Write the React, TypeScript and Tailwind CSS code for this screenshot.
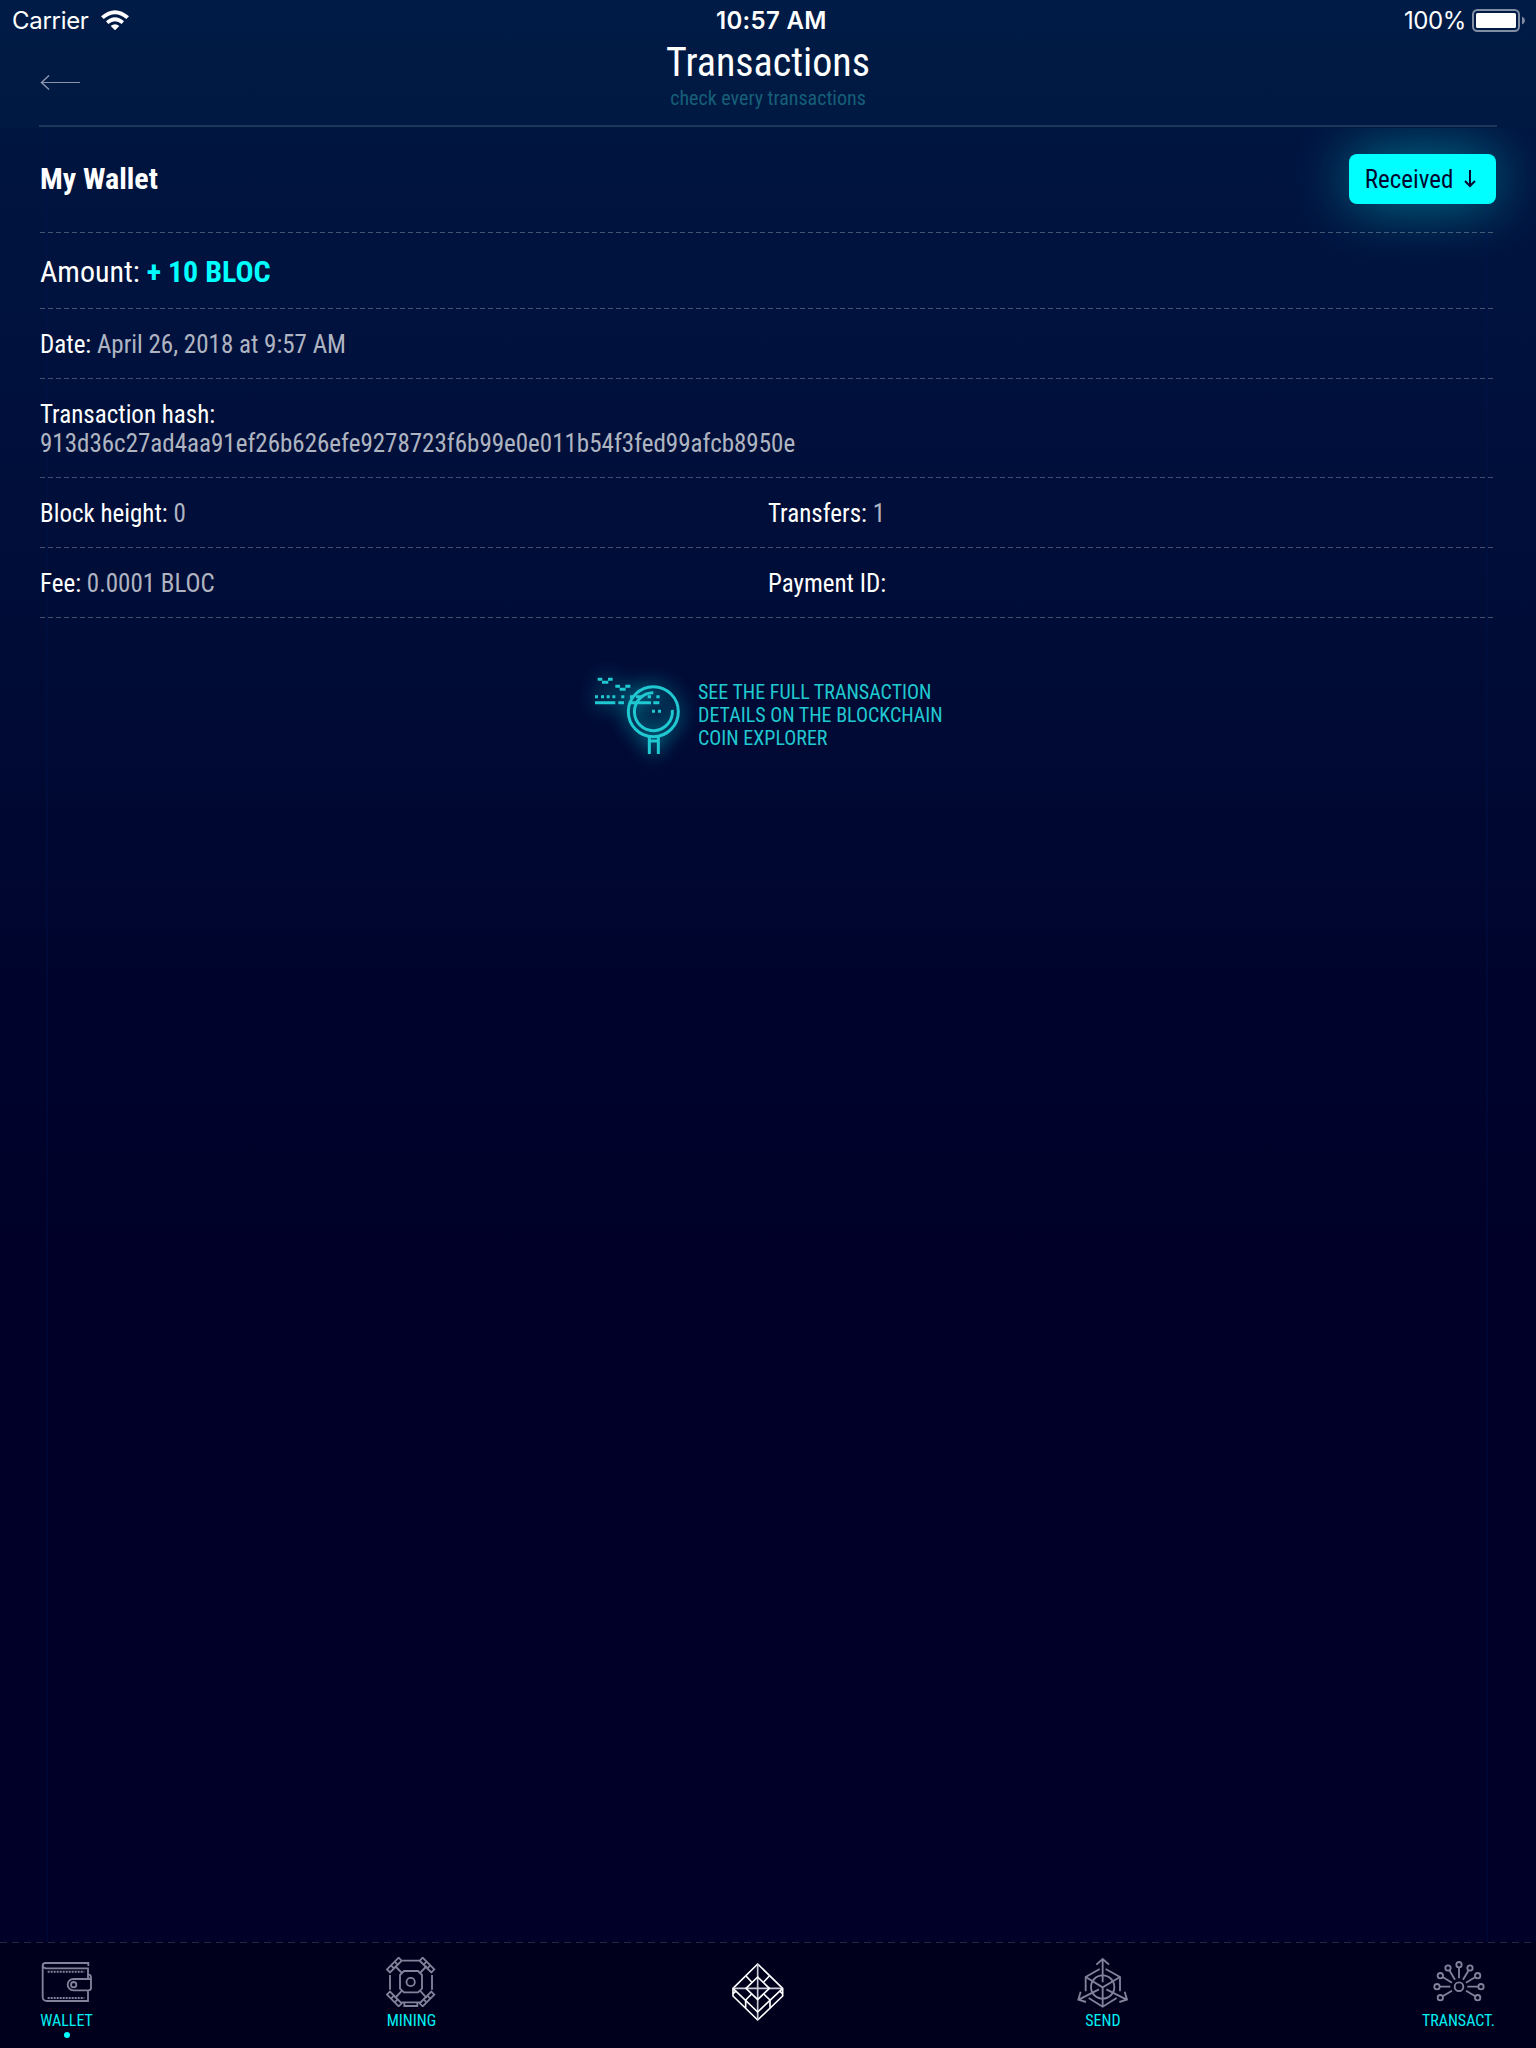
import React from 'react';

const condensed = "[font-family:'Roboto_Condensed',Roboto,sans-serif] [font-stretch:75%]";

function StatusBar() {
  return (
    <div className="relative flex h-[42px] items-center justify-between pl-3 pr-[10px] font-[Inter,sans-serif] text-[24px] leading-[42px] text-white">
      <div className="flex items-center">
        <span className="tracking-[-0.3px]">Carrier</span>
        <svg className="ml-[12px] mt-[-2px]" width="28" height="20" viewBox="303 29 84 60" fill="#fff">
          <path d="M345 90 L332 77 Q345 66 358 77 Z" />
          <path d="M318 63 Q345 38 372 63 L365 71 Q345 54 325 71 Z" />
          <path d="M303 48 Q345 11 387 48 L379 56 Q345 27 311 56 Z" />
        </svg>
      </div>
      <span className="absolute left-[716px] font-semibold tracking-[0.3px]">10:57 AM</span>
      <div className="flex items-center">
        <span className="tracking-[-0.4px]">100%</span>
        <svg className="ml-[6px]" width="54" height="24" viewBox="0 0 54 24">
          <rect x="1" y="1" width="46" height="21" rx="4.5" fill="none" stroke="#fff" strokeOpacity=".5" strokeWidth="2" />
          <rect x="4" y="4" width="40" height="15" rx="1.5" fill="#fff" />
          <path d="M50 7.5 Q53 9 53 11.5 Q53 14 50 15.5 Z" fill="#fff" fillOpacity=".5" />
        </svg>
      </div>
    </div>
  );
}

function Row({ className, children }: { className: string; children: React.ReactNode }) {
  return (
    <div>
      <div className={`flex items-center ${className}`}>{children}</div>
      <div className="h-px bg-[repeating-linear-gradient(90deg,rgba(255,255,255,0.27)_0_5px,transparent_5px_8px)]" />
    </div>
  );
}

function Field({ label, value }: { label: string; value: string }) {
  return (
    <div className="flex-1">
      {label} <span className="text-white/70">{value}</span>
    </div>
  );
}

function ExplorerIcon() {
  return (
    <svg className="overflow-visible drop-shadow-[0_0_10px_rgba(0,255,255,0.75)]" width="86" height="78" viewBox="75 81 258 234" fill="none" stroke="#20c9d1" strokeWidth="9">
      <circle cx="250" cy="185" r="75" />
      <path d="M307 180 A57 57 0 1 1 250 128" />
      <path d="M238 260 V312 M265 260 V312 M238 273 H265" />
      <path d="M83 88 H97 M96 97 H115 M114 88 H128 M136 109 H150 M149 118 H167 M166 109 H181" />
      <path d="M75 140 H84 M93 140 H102 M110 140 H119 M127 140 H136 M154 140 H163 M180 140 H189 M198 140 H216 M233 140 H243 M259 140 H269" />
      <path d="M75 158 H136 M145 158 H162 M180 158 H243 M250 158 H268" />
      <path d="M246 184 H255 M264 184 H273" />
    </svg>
  );
}

const iconStroke = '#82829a';

function WalletIcon() {
  return (
    <svg width="53" height="44" viewBox="121 120 159 132" fill="none" stroke={iconStroke} strokeWidth="5.5">
      <path d="M266 138 V129 H138 Q129 129 129 137 V233 Q131 243 142 243 H265 V213" />
      <path d="M129 138 Q131 145 140 145 H265 V177" />
      <path d="M266 163 Q274 164 274 173 V204 Q274 211 266 211 H221 A17 17 0 0 1 221 177 H268 Q274 177 274 171" />
      <circle cx="222" cy="194" r="8" />
      <path d="M144 155 H254 M144 234 H254" strokeWidth="6" strokeDasharray="6 3" />
    </svg>
  );
}

function MiningIcon() {
  return (
    <svg width="50" height="50" viewBox="81 110 150 150" fill="none" stroke={iconStroke} strokeWidth="5.5">
      <circle cx="155" cy="185" r="12.5" />
      <path d="M135 152 H177 L189 164 V205 L177 216 H135 L123 205 V164 Z" />
      <path d="M108 137 L129 158 M203 137 L183 158 M108 233 L129 211 M203 233 L183 211" />
      <path d="M130 121 H181 M93 164 V208 M219 164 V208 M128 246 H183 M136 247 V257 H175 V247" />
      <path d="M84 147 L119 112 L128 121 L93 156 Z M226 147 L191 112 L182 121 L217 156 Z M84 223 L119 258 L128 249 L93 214 Z M226 223 L191 258 L182 249 L217 214 Z" />
      <path d="M96 135 L105 144 M107 124 L116 133 M214 135 L205 144 M203 124 L194 133 M96 235 L105 226 M107 246 L116 237 M214 235 L205 226 M203 246 L194 237" />
    </svg>
  );
}

function LogoIcon() {
  return (
    <svg width="52" height="60" viewBox="96 125 156 180" fill="none" stroke="#fff" strokeWidth="5" strokeLinejoin="round">
      <path d="M173 131 L248 204 V227 L173 299 L99 227 V204 Z" />
      <path d="M173 131 V299 M99 204 H248" stroke="#c9c9d6" />
      <path d="M173 170 L208 204 L173 238 L138 204 Z" />
      <path d="M138 167 L155 185 M208 167 L191 185" />
      <path d="M99 204 L173 275 L248 204" />
      <path d="M155 221 L137 239 V262 M191 221 L210 239 V262 M99 220 L107 213 M248 220 L240 213" />
    </svg>
  );
}

function SendIcon() {
  return (
    <svg className="mt-[2px]" width="51" height="50" viewBox="82 114 153 150" fill="none" stroke={iconStroke} strokeWidth="5.5">
      <circle cx="159" cy="201" r="35" />
      <path d="M159 187 V118 M140 134 L159 117 L178 134" />
      <path d="M148 208 L87 239 M93 215 L86 239 L109 246" />
      <path d="M170 208 L231 239 M225 215 L232 239 L209 246" />
      <path d="M150 147 L108 171 V214 M168 147 L211 171 V214" />
      <path d="M108 171 L159 202 L211 171 M159 202 V260" />
      <path d="M117 234 L159 260 L201 234" />
    </svg>
  );
}

function TransactIcon() {
  return (
    <svg className="ml-[2px] mt-px" width="52" height="42" viewBox="99 126 156 126" fill="none" stroke={iconStroke} strokeWidth="5.5">
      <circle cx="177" cy="203" r="13" />
      <circle cx="177" cy="137" r="8" />
      <circle cx="144" cy="147" r="8" />
      <circle cx="210" cy="147" r="8" />
      <circle cx="121" cy="170" r="8" />
      <circle cx="233" cy="170" r="8" />
      <circle cx="111" cy="203" r="8" />
      <circle cx="243" cy="203" r="8" />
      <circle cx="121" cy="236" r="8" />
      <circle cx="233" cy="236" r="8" />
      <path d="M177 145 V178 M148 154 L165 182 M206 154 L189 182 M128 174 L156 191 M226 174 L198 191 M119 203 H151 M235 203 H202 M128 232 L156 215 M226 232 L198 215" />
    </svg>
  );
}

function NavItem({ label, active, children }: { label: string; active?: boolean; children: React.ReactNode }) {
  return (
    <div className="flex flex-col items-center">
      <div className="flex h-[61px] items-center">{children}</div>
      <span className="mt-[-1px] text-[16px] leading-[20px] text-[#00f0f4]">{label}</span>
      {active && <span className="mt-[1px] h-[6px] w-[6px] rounded-full bg-[#00ffff]" />}
    </div>
  );
}

export default function App() {
  return (
    <div className={`flex h-[2048px] w-[1536px] flex-col overflow-hidden bg-[linear-gradient(180deg,#001642_0px,#00123e_300px,#000c36_650px,#00052e_950px,#000028_1300px,#000028_1942px)] text-white ${condensed}`}>
      <header className="relative z-10 h-[128px] shrink-0 bg-[linear-gradient(180deg,#001b46,#001942)]">
        <StatusBar />
        <svg className="absolute left-10 top-[74px]" width="41" height="17" viewBox="0 0 41 17" fill="none" stroke="#8a93ab">
          <path d="M1 8.5 H40" strokeWidth="1" />
          <path d="M9 1.5 L1.5 8.5 L9 15.5" strokeWidth="1.5" />
        </svg>
        <h1 className="mt-px text-center text-[40px] leading-[40px]">Transactions</h1>
        <p className="mt-[3px] text-center text-[20px] leading-[24px] text-[#175f78]">check every transactions</p>
        <div className="absolute bottom-px left-[39px] right-[39px] h-[2px] bg-[#1f3559]" />
      </header>

      <main className="ml-[46px] mr-[48px] flex-1 border-x-2 border-[#00144c]/30">
        <div className="-ml-2 -mr-[10px] text-[25px] leading-[29px]">
          <Row className="h-[104px] justify-between pb-[2px]">
            <h2 className="-mt-[2px] text-[30px] font-bold">My Wallet</h2>
            <button className="flex h-[50px] w-[147px] items-center justify-center rounded-lg bg-[#00ffff] pr-1 text-[#00062e] shadow-[0_0_60px_rgba(0,255,255,0.45)]">
              <span>Received</span>
              <svg className="ml-[11px]" width="12" height="18" viewBox="0 0 12 18" fill="none" stroke="currentColor" strokeWidth="2">
                <path d="M6 0 V16 M1 11 L6 16 L11 11" />
              </svg>
            </button>
          </Row>
          <Row className="h-[75px] pt-[2px] text-[30px]">
            <span>Amount: <b className="text-[#00ffff]">+ 10 BLOC</b></span>
          </Row>
          <Row className="h-[69px] pt-[2px]">
            <Field label="Date:" value="April 26, 2018 at 9:57 AM" />
          </Row>
          <Row className="h-[98px] pt-[2px]">
            <div>
              <p>Transaction hash:</p>
              <p className="text-white/70">913d36c27ad4aa91ef26b626efe9278723f6b99e0e011b54f3fed99afcb8950e</p>
            </div>
          </Row>
          <Row className="h-[69px] pt-[2px]">
            <Field label="Block height:" value="0" />
            <Field label="Transfers:" value="1" />
          </Row>
          <Row className="h-[69px] pt-[2px]">
            <Field label="Fee:" value="0.0001 BLOC" />
            <Field label="Payment ID:" value="" />
          </Row>
        </div>
        <a className="mt-[59px] flex pl-[547px] text-[#20c9d1]">
          <ExplorerIcon />
          <p className="ml-[17px] mt-[4px] text-[20px] leading-[23px]">
            SEE THE FULL TRANSACTION<br />DETAILS ON THE BLOCKCHAIN<br />COIN EXPLORER
          </p>
        </a>
      </main>

      <nav className="h-[106px] shrink-0 bg-[#00001c]">
        <div className="h-px bg-[repeating-linear-gradient(90deg,#26263f_0_7px,transparent_7px_12px)]" />
        <div className="flex items-start justify-between pl-10 pr-[41px] pt-[8px]">
          <NavItem label="WALLET" active><WalletIcon /></NavItem>
          <NavItem label="MINING"><MiningIcon /></NavItem>
          <div className="ml-[2px] mt-[11px]"><LogoIcon /></div>
          <NavItem label="SEND"><SendIcon /></NavItem>
          <NavItem label="TRANSACT."><TransactIcon /></NavItem>
        </div>
      </nav>
    </div>
  );
}
